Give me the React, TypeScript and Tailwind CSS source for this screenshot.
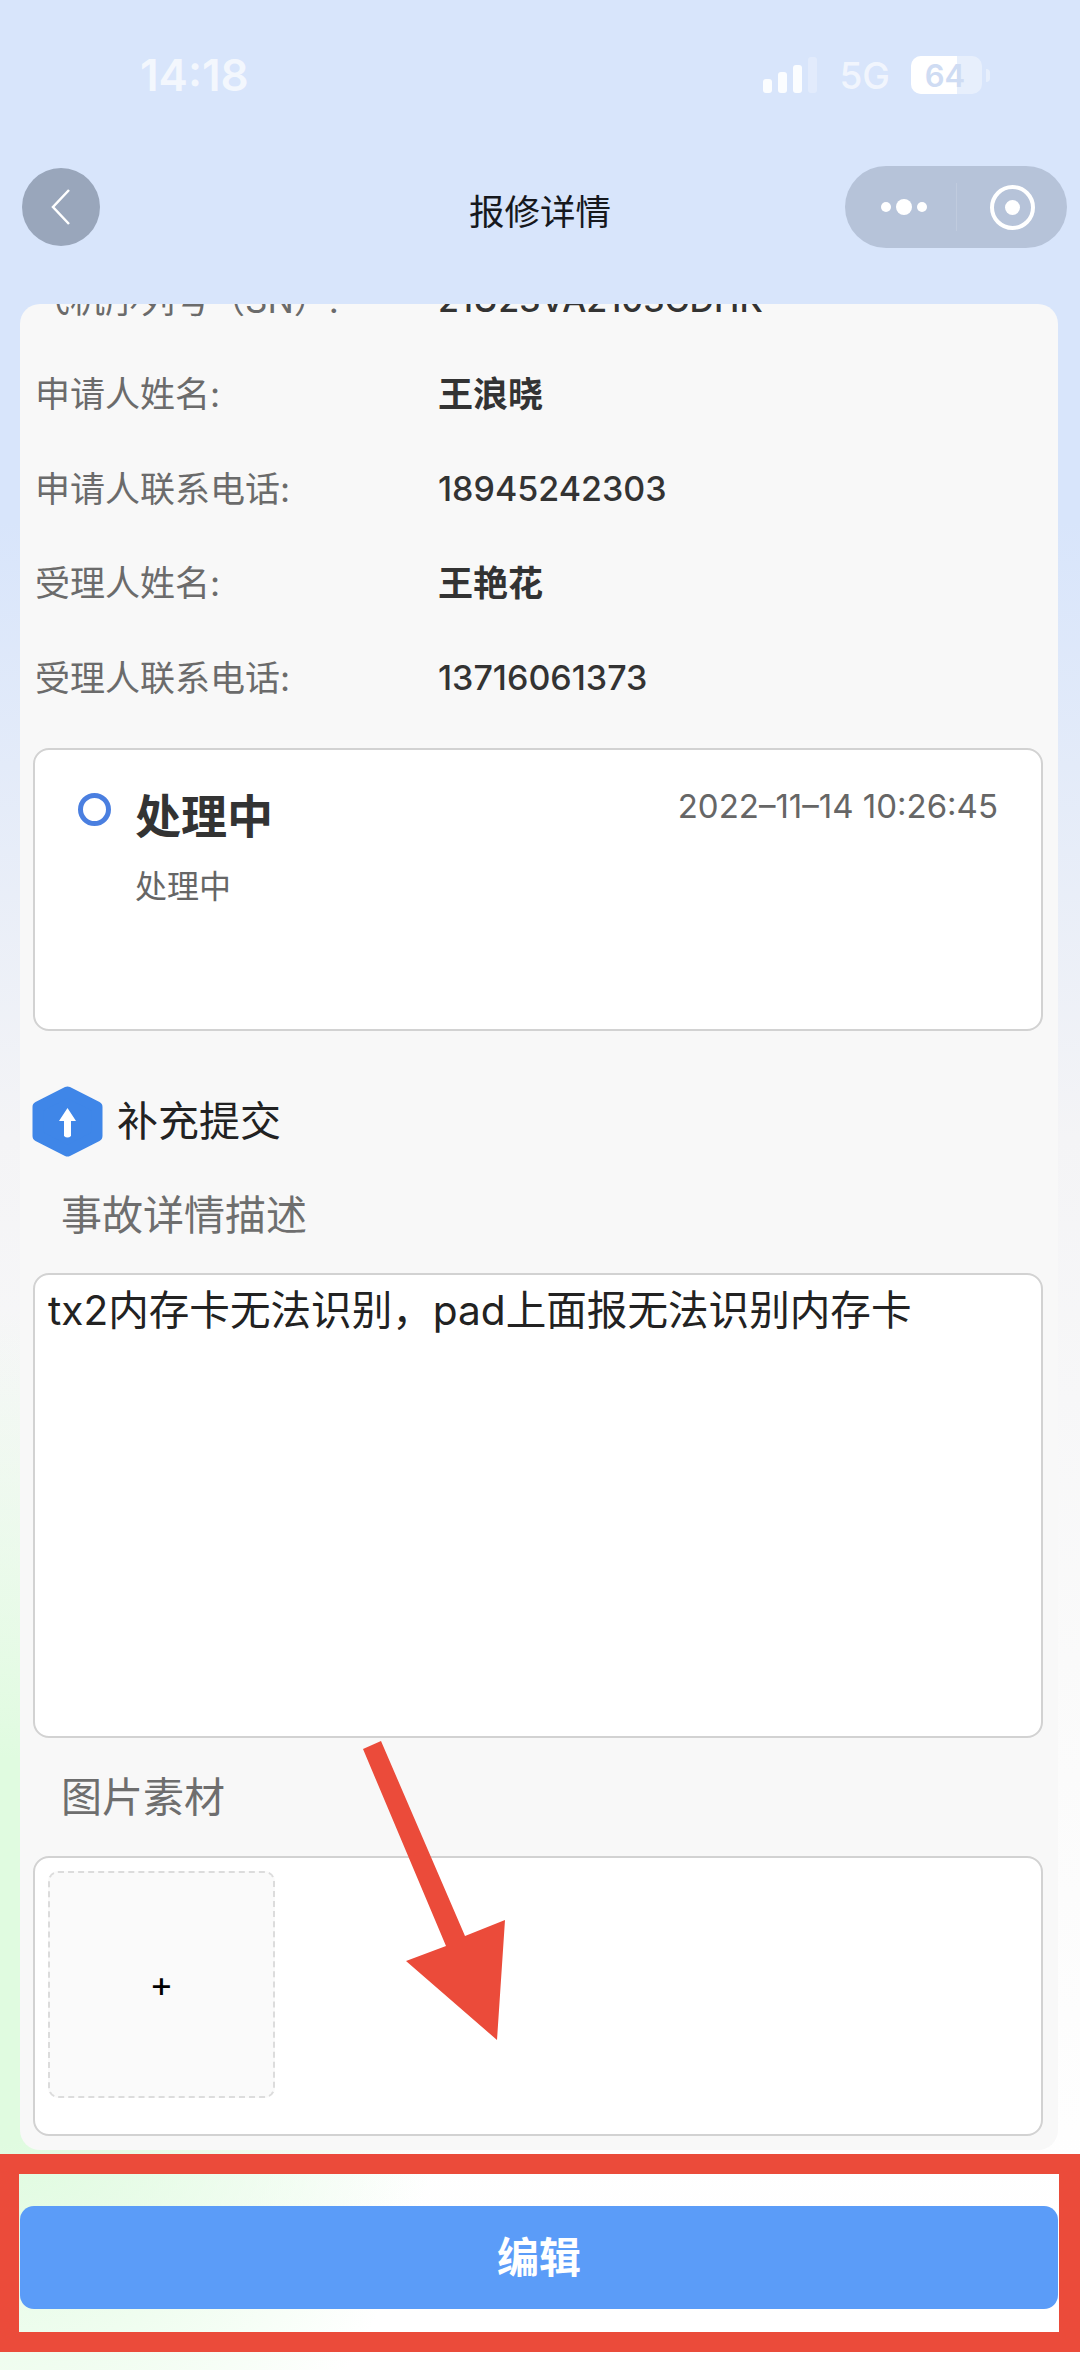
const FONT = "font-['Inter','Noto_Sans_CJK_SC',sans-serif]";

const NAME_VALUE = "text-[35px] font-semibold";
const NUMBER_VALUE = "text-[34px] font-medium";

const infoRows = [
  { label: "飞机序列号（SN）:", value: "21U23VA2103CDHK", valueClass: NUMBER_VALUE },
  { label: "申请人姓名:", value: "王浪晓", valueClass: NAME_VALUE },
  { label: "申请人联系电话:", value: "18945242303", valueClass: NUMBER_VALUE },
  { label: "受理人姓名:", value: "王艳花", valueClass: NAME_VALUE },
  { label: "受理人联系电话:", value: "13716061373", valueClass: NUMBER_VALUE },
];

function StatusBar() {
  return (
    <div className="flex h-[150px] items-center justify-between pl-[140px] pr-[90px] text-white">
      <span className="text-[44px] font-semibold leading-none opacity-70">14:18</span>
      <div className="flex items-center">
        <svg width="54" height="36" viewBox="0 0 54 36">
          <rect x="0" y="22" width="9" height="14" rx="3" fill="#fff" fillOpacity="0.9" />
          <rect x="15" y="15" width="9" height="21" rx="3" fill="#fff" fillOpacity="0.9" />
          <rect x="30" y="8" width="9" height="28" rx="3" fill="#fff" fillOpacity="0.9" />
          <rect x="45" y="0" width="9" height="36" rx="3" fill="#fff" fillOpacity="0.25" />
        </svg>
        <span className="ml-[22px] text-[37px] font-medium leading-none opacity-65">5G</span>
        <div className="relative ml-[21px] h-[38px] w-[71px] overflow-hidden rounded-[10px] bg-white/40">
          <div className="h-full w-[46px] bg-white" />
          <span className="absolute inset-0 flex items-center justify-center pr-[3px] text-[31px] font-semibold leading-none text-[#cfdcf3]">
            64
          </span>
        </div>
        <div className="ml-[4px] h-[13px] w-[4px] rounded-r-full bg-white/40" />
      </div>
    </div>
  );
}

function NavBar() {
  return (
    <div className="mb-[56px] mt-[16px] flex h-[82px] items-center px-[13px]">
      <div className="flex-1">
        <div className="ml-[9px] flex h-[78px] w-[78px] items-center justify-center rounded-full bg-[#99a6bb]">
          <svg width="24" height="38" viewBox="0 0 24 38" fill="none">
            <path d="M20 2 L4 19 L20 36" stroke="#fff" strokeWidth="2.5" />
          </svg>
        </div>
      </div>
      <span className="mt-[12px] text-[35.5px] leading-none text-[#16181d]">报修详情</span>
      <div className="flex flex-1 justify-end">
        <div className="flex h-[82px] w-[222px] items-center rounded-full bg-[#b6c3d9]">
          <div className="flex h-[48px] w-[112px] items-center justify-center gap-[5px] border-r border-r-[#c0cbde] pl-[6px]">
            <div className="h-[10px] w-[10px] rounded-full bg-white" />
            <div className="h-[16px] w-[16px] rounded-full bg-white" />
            <div className="h-[10px] w-[10px] rounded-full bg-white" />
          </div>
          <div className="flex flex-1 items-center justify-center">
            <div className="flex h-[45px] w-[45px] items-center justify-center rounded-full border-[4px] border-white">
              <div className="h-[15px] w-[15px] rounded-full bg-white" />
            </div>
          </div>
        </div>
      </div>
    </div>
  );
}

function UploadIcon() {
  return (
    <svg width="71" height="71" viewBox="0 0 71 71">
      <path
        d="M35.5 6 L65 21 L65 50 L35.5 65 L6 50 L6 21 Z"
        fill="#3f86e8"
        stroke="#3f86e8"
        strokeWidth="11"
        strokeLinejoin="round"
      />
      <path d="M35.5 22 L44 35 L39 35 L39 50 Q35.5 53 32 50 L32 35 L27 35 Z" fill="#fff" />
    </svg>
  );
}

function Annotation() {
  return (
    <>
      <div className="absolute left-0 top-[2154px] h-[198px] w-[1080px] border-y-[20px] border-l-[19px] border-r-[21px] border-[#eb4b3a]" />
      <svg className="absolute left-[355px] top-[1735px]" width="155" height="310" viewBox="355 1735 155 310">
        <path d="M381 1741 L363 1749 L446 1946 L406 1961 L497 2040 L505 1920 L465 1936 Z" fill="#eb4b3a" />
      </svg>
    </>
  );
}

export default function App() {
  return (
    <div
      className={`relative h-[2370px] w-[1080px] overflow-hidden bg-[radial-gradient(ellipse_460px_640px_at_0px_1950px,#e0fbe0_0%,#e0fbe0_30%,#e0fbe000_100%),linear-gradient(180deg,#d8e5fb_0%,#d8e5fb_22%,#f4f4f6_48%,#fafafa_70%,#ffffff_95%)] ${FONT}`}
    >
      <StatusBar />
      <NavBar />

      <div className="ml-[20px] mr-[22px] h-[1846px] overflow-hidden rounded-[20px] bg-[#f8f8f8]">
        <div className="-mt-[51px]">
          {infoRows.map((row) => (
            <div key={row.label} className="flex h-[94.5px] items-center pl-[15px]">
              <span className="w-[403px] text-[35px] leading-none text-[#6b6b6b]">{row.label}</span>
              <span className={`${row.valueClass} leading-none text-[#333]`}>{row.value}</span>
            </div>
          ))}
        </div>

        <div className="ml-[13px] mr-[15px] mt-[22px] flex h-[283px] items-start rounded-[16px] border-2 border-[#d2d2d2] bg-white pl-[43px] pr-[43px] pt-[43px]">
          <div className="h-[33px] w-[33px] rounded-full border-[5px] border-[#4a7fe0]" />
          <div className="ml-[24px] flex-1">
            <div className="-mt-[5px] text-[46px] font-bold leading-[56px] text-[#333]">处理中</div>
            <div className="mt-[23px] text-[32px] leading-[40px] text-[#666]">处理中</div>
          </div>
          <span className="-mt-[7px] text-[33px] leading-[40px] text-[#666]">2022–11–14 10:26:45</span>
        </div>

        <div className="ml-[12px] mt-[55px] flex items-center gap-[14px]">
          <UploadIcon />
          <span className="text-[41px] leading-none text-[#222]">补充提交</span>
        </div>

        <div className="ml-[41px] mt-[30px] text-[41px] leading-[56px] text-[#6e6e6e]">事故详情描述</div>
        <div className="ml-[13px] mr-[15px] mt-[30px] h-[465px] rounded-[16px] border-2 border-[#d2d2d2] bg-white pl-[13px] pt-[12px] text-[40.6px] leading-[48px] text-[#222]">
          tx2内存卡无法识别，pad上面报无法识别内存卡
        </div>

        <div className="ml-[41px] mt-[31px] text-[41px] leading-[56px] text-[#6e6e6e]">图片素材</div>
        <div className="ml-[13px] mr-[15px] mt-[31px] h-[280px] rounded-[16px] border-2 border-[#d2d2d2] bg-white pl-[13px] pt-[13px]">
          <div className="flex h-[227px] w-[227px] items-center justify-center rounded-[10px] border-2 border-dashed border-[#dcdcdc] bg-[#fafafa] text-[36px] leading-none text-black">
            +
          </div>
        </div>
      </div>

      <div className="ml-[20px] mr-[22px] mt-[56px] flex h-[103px] items-center justify-center rounded-[14px] bg-[#5b9cf8] text-[42px] font-bold leading-none text-white">
        编辑
      </div>

      <Annotation />
    </div>
  );
}
